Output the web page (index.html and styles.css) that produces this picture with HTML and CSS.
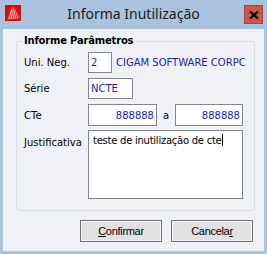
FILE: index.html
```
<!DOCTYPE html>
<html lang="pt">
<head>
    <meta charset="UTF-8">
    <title>Informa Inutilização</title>
    <link rel="stylesheet" href="styles.css">
</head>
<body>
    <div class="window">
        <div class="titlebar">
            <svg class="app-icon" width="16" height="16" viewBox="0 0 16 16">
                <rect x="0" y="0" width="16" height="16" fill="#d01010"/>
                <path d="M2 15 L6 3 Q8 1 10 3 L15 13 Z" fill="#e24040"/>
                <path d="M4 14 L7 4 M6 14 L8.5 3.5 M8 14 L10 5 M10 14 L11.5 8 M12 14 L13 11" stroke="#ffb4b4" stroke-width="0.8" fill="none"/>
            </svg>
            <span class="title">Informa Inutilização</span>
            <button class="close">
                <svg width="10" height="8" viewBox="0 0 10 8">
                    <path d="M1 0.5 L9 7.5 M9 0.5 L1 7.5" stroke="#000" stroke-width="2.2"/>
                </svg>
            </button>
        </div>

        <div class="client">
            <fieldset class="group">
                <legend>Informe Parâmetros</legend>

                <div class="row row-first">
                    <label>Uni. Neg.</label>
                    <div class="field field-code">2</div>
                    <span class="desc">CIGAM SOFTWARE CORPC</span>
                </div>
                <div class="row row-second">
                    <label>Série</label>
                    <div class="field field-serie">NCTE</div>
                </div>
                <div class="row row-third">
                    <label>CTe</label>
                    <div class="field field-num">888888</div>
                    <span class="sep">a</span>
                    <div class="field field-num field-num2">888888</div>
                </div>
                <div class="row row-memo">
                    <label class="label-top">Justificativa</label>
                    <div class="memo">teste de inutilização de cte<span class="caret"></span></div>
                </div>
            </fieldset>

            <div class="buttons">
                <button class="btn"><u>C</u>onfirmar</button>
                <button class="btn">Cancela<u>r</u></button>
            </div>
        </div>
    </div>
</body>
</html>
```

FILE: styles.css
```
body {
    margin: 0;
    background: #a9c3de;
}

.window {
    width: 267px;
    height: 254px;
    box-sizing: border-box;
    background: #a9c3de;
    padding: 0 3px 3px 3px;
    display: flex;
    flex-direction: column;
    font-family: "DejaVu Sans", sans-serif;
    font-size: 10px;
    color: #000;
}

.titlebar {
    height: 29px;
    display: grid;
    grid-template-columns: 1fr auto 1fr;
    align-items: start;
    margin: 0 -3px;
}

.app-icon {
    margin: 5px 0 0 5px;
}

.title {
    font-family: "Noto Sans", sans-serif;
    font-size: 14px;
    line-height: 20px;
    margin-top: 4px;
    color: #1a1a1a;
}

.close {
    justify-self: end;
    width: 19px;
    height: 19px;
    margin: 5px 4px 0 0;
    padding: 0;
    border: 1px solid #a8443a;
    background: #c9574c;
    display: flex;
    align-items: center;
    justify-content: center;
}

.client {
    flex: 1;
    background: #f0f1f6;
    padding: 6px 11px 0 13px;
    display: flex;
    flex-direction: column;
}

.group {
    margin: 0;
    padding: 5px 8px 11px 7px;
    border: 1px solid #d6dde3;
    border-radius: 3px;
}

.group legend {
    font-weight: bold;
    line-height: 12px;
    padding: 0 2px;
    margin-left: -2px;
    letter-spacing: -0.2px;
    color: #000;
}

.row {
    display: flex;
    align-items: center;
}

.row label {
    width: 64px;
    flex-shrink: 0;
}

.row-first {
    height: 21px;
    margin-bottom: 5px;
}

.row-second {
    height: 21px;
    margin-bottom: 5px;
}

.row-third {
    height: 22px;
    margin-bottom: 4px;
}

.row-memo {
    align-items: flex-start;
}

.label-top {
    padding-top: 7px;
}

.field {
    box-sizing: border-box;
    height: 100%;
    border: 1px solid #82868c;
    background: #fff;
    color: #1c1cb0;
    padding: 0 2px;
    display: flex;
    align-items: center;
}

.field-code {
    width: 24px;
}

.field-serie {
    width: 45px;
}

.field-num {
    width: 69px;
    justify-content: flex-end;
}

.field-num2 {
    width: 68px;
}

.desc {
    margin-left: 4px;
    color: #1c1cb0;
    white-space: nowrap;
}

.sep {
    width: 18px;
    text-align: center;
}

.memo {
    box-sizing: border-box;
    width: 155px;
    height: 69px;
    border: 1px solid #82868c;
    background: #fff;
    padding: 3px 4px;
    line-height: 13px;
    letter-spacing: -0.25px;
    white-space: nowrap;
}

.caret {
    display: inline-block;
    width: 1px;
    height: 12px;
    margin-left: 1px;
    background: #000;
    vertical-align: -2px;
}

.buttons {
    display: flex;
    justify-content: flex-end;
    gap: 9px;
    margin-top: 9px;
}

.btn {
    width: 82px;
    height: 22px;
    padding: 0;
    border: 1px solid #707070;
    background: #e1e1e1;
    box-shadow: inset 0 0 0 1px #f4f4f4;
    font-family: "Liberation Sans", sans-serif;
    font-size: 11px;
    letter-spacing: -0.3px;
    color: #000;
}
```
